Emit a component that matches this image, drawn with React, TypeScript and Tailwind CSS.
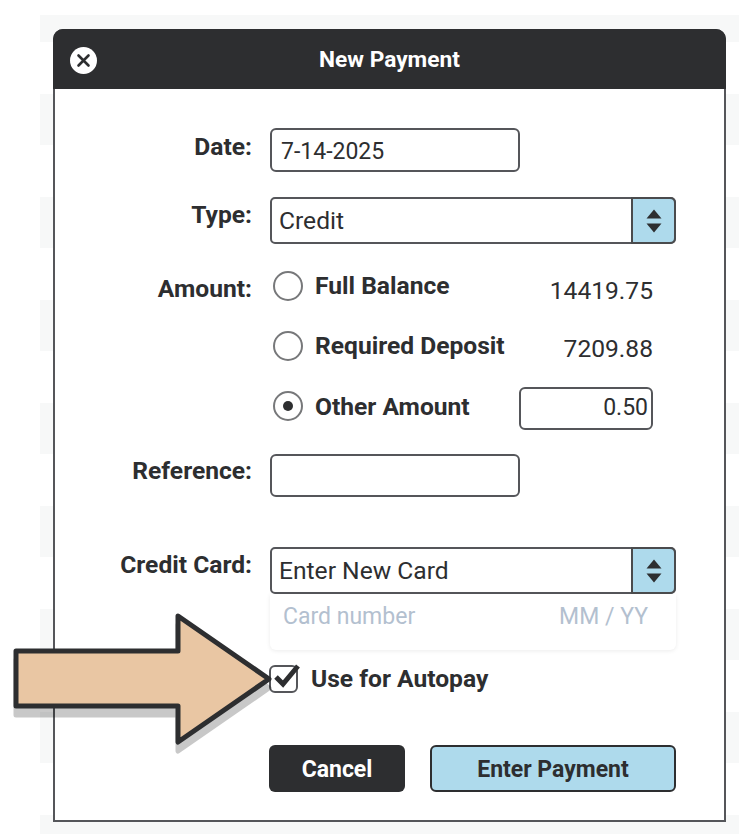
import React from "react";

const ink = "text-[#2d2e30]";

function Stepper() {
  return (
    <div className="w-[45px] self-stretch -my-[2px] -mr-[2px] bg-[#aedaec] border-2 border-[#4a4b4d] rounded-r-[6px] flex flex-col items-center justify-center gap-[4px]">
      <svg width="16" height="10" viewBox="0 0 16 10"><path d="M8 0.5 L15.5 9.5 H0.5 Z" fill="#2d2e30" /></svg>
      <svg width="16" height="10" viewBox="0 0 16 10"><path d="M0.5 0.5 H15.5 L8 9.5 Z" fill="#2d2e30" /></svg>
    </div>
  );
}

function Label({ children }: { children: React.ReactNode }) {
  return <div className={`w-[197px] text-right text-[24.6px] leading-[28px] font-bold ${ink}`}>{children}</div>;
}

function Radio({ checked }: { checked?: boolean }) {
  return (
    <div className="w-[30px] h-[30px] rounded-full border-2 border-[#77787a] bg-white flex items-center justify-center shrink-0">
      {checked && <div className="w-[10px] h-[10px] rounded-full bg-[#2d2e30]" />}
    </div>
  );
}

function Select({ value }: { value: string }) {
  return (
    <div className="w-[406px] h-[47px] border-2 border-[#55565a] rounded-[5px] flex items-center">
      <div className={`flex-1 pl-[7px] pt-[2px] text-[24.6px] ${ink}`}>{value}</div>
      <Stepper />
    </div>
  );
}

function AmountRow({ label, checked, children }: { label: string; checked?: boolean; children: React.ReactNode }) {
  return (
    <div className="flex items-center h-[44px]">
      <Radio checked={checked} />
      <div className={`ml-[12px] flex-1 text-[24.6px] font-bold ${ink} ${checked ? "pt-[3px]" : ""}`}>{label}</div>
      {children}
    </div>
  );
}

export default function App() {
  const bands = [94, 197, 300, 403, 505, 608, 711];
  return (
    <div className="relative w-[754px] h-[838px] bg-white overflow-hidden font-['Roboto',sans-serif]">
      {/* faded table rows behind the dialog */}
      <div className="pt-[15px] pl-[40px] w-[739px] flex flex-col">
        <div className="h-[27px] bg-[#f7f8f8] mb-[52px]" />
        {bands.map((b) => (
          <div key={b} className="h-[51px] bg-[#f7f8f8] mb-[52px]" />
        ))}
        <div className="h-[19px] bg-[#f7f8f8]" />
      </div>

      {/* dialog */}
      <div className="absolute left-[53px] top-[29px] w-[673px] h-[793px] bg-white border-2 border-[#55565a] rounded-t-[10px]">
        <div className="relative h-[60px] -mx-[2px] -mt-[2px] bg-[#2d2e30] rounded-t-[10px] flex items-center justify-center">
          <div className="absolute left-[17px] top-[18px] w-[27px] h-[27px] rounded-full bg-white flex items-center justify-center">
            <svg width="15" height="15" viewBox="0 0 15 15"><path d="M2.5 2.5 L12.5 12.5 M12.5 2.5 L2.5 12.5" stroke="#2d2e30" strokeWidth="2.6" strokeLinecap="round" /></svg>
          </div>
          <div className="text-white text-[22.7px] font-bold pt-[2px]">New Payment</div>
        </div>

        <div className="pt-[39px] flex flex-col">
          <div className="flex">
            <div className="pt-[5px]"><Label>Date:</Label></div>
            <div className={`ml-[18px] w-[250px] h-[44px] border-2 border-[#55565a] rounded-[6px] flex items-center pl-[9px] pt-[5px] text-[23px] ${ink}`}>7-14-2025</div>
          </div>

          <div className="flex mt-[25px]">
            <div className="pt-[4px]"><Label>Type:</Label></div>
            <div className="ml-[18px]"><Select value="Credit" /></div>
          </div>

          <div className="flex mt-[20px]">
            <div className="pt-[11px]"><Label>Amount:</Label></div>
            <div className="ml-[21px] w-[380px] flex flex-col gap-[16px]">
              <AmountRow label="Full Balance">
                <div className={`text-[24.6px] pt-[10px] ${ink}`}>14419.75</div>
              </AmountRow>
              <AmountRow label="Required Deposit">
                <div className={`text-[24.6px] pt-[6px] ${ink}`}>7209.88</div>
              </AmountRow>
              <AmountRow label="Other Amount" checked>
                <div className={`mt-[5px] w-[134px] h-[43px] border-2 border-[#55565a] rounded-[6px] flex items-center justify-end pr-[3px] text-[23px] ${ink}`}>0.50</div>
              </AmountRow>
            </div>
          </div>

          <div className="flex mt-[26px]">
            <div className="pt-[3px]"><Label>Reference:</Label></div>
            <div className="ml-[18px] w-[250px] h-[43px] border-2 border-[#55565a] rounded-[6px]" />
          </div>

          <div className="flex mt-[50px]">
            <div className="pt-[4px]"><Label>Credit Card:</Label></div>
            <div className="ml-[18px]">
              <Select value="Enter New Card" />
              <div className="w-[406px] h-[56px] rounded-b-[6px] shadow-[0_1px_4px_rgba(0,0,0,0.08)] flex items-start justify-between pl-[13px] pr-[28px] pt-[6px] text-[23px] text-[#b3c0cf]">
                <span>Card number</span>
                <span>MM / YY</span>
              </div>
            </div>
          </div>

          <div className="flex items-center ml-[214px] mt-[11px]">
            <div className="relative w-[29px] h-[28px] border-2 border-[#55565a] rounded-[6px]">
              <svg className="absolute top-[-4px]" width="32" height="28" viewBox="0 0 32 28">
                <path d="M5 14 L12 21 L27 3" fill="none" stroke="#2d2e30" strokeWidth="5" />
              </svg>
            </div>
            <div className={`ml-[13px] text-[24.6px] font-bold ${ink}`}>Use for Autopay</div>
          </div>

          <div className="flex ml-[214px] mt-[47px] gap-[25px]">
            <div className="w-[136px] h-[47px] pt-[3px] rounded-[6px] bg-[#2d2e30] text-white text-[23px] font-bold flex items-center justify-center">Cancel</div>
            <div className={`w-[246px] h-[47px] pt-[3px] rounded-[6px] bg-[#aedaec] border-2 border-[#2d2e30] text-[23px] font-bold flex items-center justify-center ${ink}`}>Enter Payment</div>
          </div>
        </div>
      </div>

      {/* callout arrow */}
      <svg className="absolute left-0 top-[600px]" width="290" height="170" viewBox="0 0 290 170">
        <g transform="translate(0 9)" opacity="0.21">
          <path d="M16 51 H178 V16 L269 79 L178 142 V106 H16 Z" fill="#000" stroke="#000" strokeWidth="5" strokeLinejoin="round" />
        </g>
        <path d="M16 51 H178 V16 L269 79 L178 142 V106 H16 Z" fill="#e9c6a3" stroke="#2d2e30" strokeWidth="5" strokeLinejoin="round" />
      </svg>
    </div>
  );
}
